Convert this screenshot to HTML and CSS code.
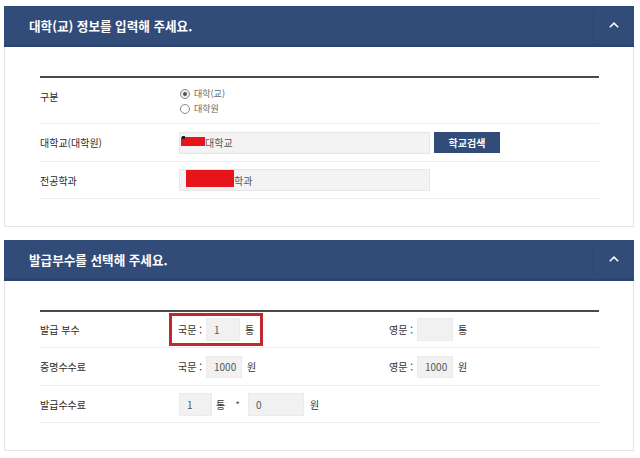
FILE: index.html
```html
<!DOCTYPE html>
<html lang="ko">
<head>
<meta charset="utf-8">
<title>발급 신청</title>
<link rel="stylesheet" href="styles.css">
</head>
<body>
<div class="page">
  <section class="panel">
    <header class="panel-head">
      <h2 class="panel-title">대학(교) 정보를 입력해 주세요.</h2>
      <button class="toggle" type="button" aria-label="접기">
        <svg width="12" height="8" viewBox="0 0 12 8"><path d="M1.8 6.3 L6 2.1 L10.2 6.3" fill="none" stroke="#fff" stroke-width="1.5"/></svg>
      </button>
    </header>
    <div class="panel-body">
      <div class="table">
        <div class="row row-radio">
          <div class="label">구분</div>
          <div class="value radios">
            <label class="radio"><span class="dot checked"></span>대학(교)</label>
            <label class="radio"><span class="dot"></span>대학원</label>
          </div>
        </div>
        <div class="row row-b">
          <div class="label">대학교(대학원)</div>
          <div class="value">
            <div class="field wide f-univ"><span class="redact r1"><i></i></span>대학교</div>
            <button class="btn" type="button">학교검색</button>
          </div>
        </div>
        <div class="row row-c">
          <div class="label">전공학과</div>
          <div class="value">
            <div class="field wide f-major"><span class="redact r2"></span>학과</div>
          </div>
        </div>
      </div>
    </div>
  </section>

  <section class="panel panel2">
    <header class="panel-head">
      <h2 class="panel-title">발급부수를 선택해 주세요.</h2>
      <button class="toggle" type="button" aria-label="접기">
        <svg width="12" height="8" viewBox="0 0 12 8"><path d="M1.8 6.3 L6 2.1 L10.2 6.3" fill="none" stroke="#fff" stroke-width="1.5"/></svg>
      </button>
    </header>
    <div class="panel-body">
      <div class="table">
        <div class="row row-d marked">
          <div class="label">발급 부수</div>
          <div class="value">
            <div class="group">
              <span class="gl">국문 :</span><div class="field sm w34">1</div><span class="unit">통</span>
            </div>
            <div class="group">
              <span class="gl">영문 :</span><div class="field sm w36"></div><span class="unit">통</span>
            </div>
          </div>
        </div>
        <div class="row row-b">
          <div class="label">증명수수료</div>
          <div class="value">
            <div class="group">
              <span class="gl">국문 :</span><div class="field sm w36 short">1000</div><span class="unit">원</span>
            </div>
            <div class="group">
              <span class="gl">영문 :</span><div class="field sm w36 short">1000</div><span class="unit">원</span>
            </div>
          </div>
        </div>
        <div class="row row-c">
          <div class="label">발급수수료</div>
          <div class="value fee">
            <div class="field sm w33">1</div><span class="unit">통</span><span class="star">*</span><div class="field sm w56">0</div><span class="unit">원</span>
          </div>
        </div>
      </div>
    </div>
  </section>
</div>
</body>
</html>
```
FILE: styles.css
```css
*, *::before, *::after { box-sizing: border-box; }
html, body { margin: 0; padding: 0; background: #fff; }
body {
  font-family: "Noto Sans CJK KR", "Noto Sans", sans-serif;
  color: #333;
  font-size: 10px;
}
.page { padding: 6px 6px 0 4px; width: 640px; }
.panel { width: 630px; }
.panel2 { margin-top: 13px; }
.panel-head {
  height: 41px;
  background: #324c7a;
  border-bottom: 3px solid #2c4470;
  display: flex;
  align-items: center;
  justify-content: space-between;
}
.panel-title {
  margin: 0 0 0 25px;
  font-size: 12.6px;
  font-weight: 700;
  color: #fff;
  line-height: 16px;
  padding-top: 2px;
}
.toggle {
  width: 41px;
  height: 30px;
  margin-top: 2px;
  border: 0;
  border-left: 1px solid #2b4370;
  background: transparent;
  display: flex;
  align-items: center;
  justify-content: center;
  padding: 0 0 2px 0;
}
.panel-body {
  border: 1px solid #e4e4e4;
  border-top: 0;
  padding: 29px 34px 27px 35px;
}
.table { border-top: 2px solid #4a4a4a; }
.row {
  display: flex;
  align-items: center;
  border-bottom: 1px solid #ececec;
  position: relative;
}
.row-radio { height: 46px; align-items: flex-start; }
.row-b { height: 38px; }
.row-c { height: 37px; }
.row-d { height: 36px; }
.label {
  width: 139px;
  flex: none;
  font-size: 10px;
  line-height: 15px;
  color: #2a2a2a;
}
.row-radio .label { padding-top: 11px; }
.value { display: flex; align-items: center; }
.radios { flex-direction: column; align-items: flex-start; padding-top: 8px; }
.radio {
  display: flex;
  align-items: center;
  height: 15px;
  font-size: 9px;
  color: #666;
  padding-left: 1px;
}
.dot {
  width: 10px;
  height: 10px;
  border-radius: 50%;
  border: 1px solid #8a8a8a;
  background: #fff;
  margin-right: 4px;
  display: flex;
  align-items: center;
  justify-content: center;
}
.dot.checked { background: #eee; }
.dot.checked::after {
  content: "";
  width: 4px;
  height: 4px;
  border-radius: 50%;
  background: #555;
}
.field {
  height: 22px;
  background: #f3f3f3;
  border: 1px solid #e6e6e6;
  display: flex;
  align-items: center;
  color: #555;
  font-size: 10px;
}
.wide { width: 251px; }
.f-univ { padding-left: 1px; }
.f-major { padding-left: 6px; }
.redact { display: inline-block; background: #e8141c; position: relative; }
.r1 { width: 24px; height: 9px; margin-top: -2px; }
.r1 i {
  position: absolute;
  left: 1px;
  top: -1px;
  width: 3px;
  height: 3px;
  background: #222;
}
.r2 { width: 48px; height: 17px; margin-top: -4px; }
.btn {
  margin-left: 4px;
  width: 66px;
  height: 21px;
  background: #324c7a;
  border: 0;
  color: #fff;
  font-family: inherit;
  font-size: 10px;
  font-weight: 700;
  padding: 0;
}
.group {
  width: 211px;
  display: flex;
  align-items: center;
}
.row-d .value, .row-d + .row .value { margin-left: -1px; }
.gl { width: 28px; font-size: 10px; color: #333; }
.field.sm {
  height: 23px;
  background: #f1f1f1;
  border: 1px solid #ebebeb;
  padding-left: 7px;
}
.field.short { height: 22px; }
.w33 { width: 33px; }
.w34 { width: 34px; }
.w36 { width: 36px; }
.w56 { width: 56px; }
.unit { margin-left: 5px; color: #333; font-size: 10px; }
.fee .unit:first-of-type { margin-left: 4px; }
.star { margin: 0 8px 0 10px; color: #555; font-size: 10px; }
.fee .w56 + .unit { margin-left: 6px; }
.marked::after {
  content: "";
  position: absolute;
  left: 129px;
  top: 1px;
  width: 94px;
  height: 33px;
  border: 3px solid #c4262e;
}
```
